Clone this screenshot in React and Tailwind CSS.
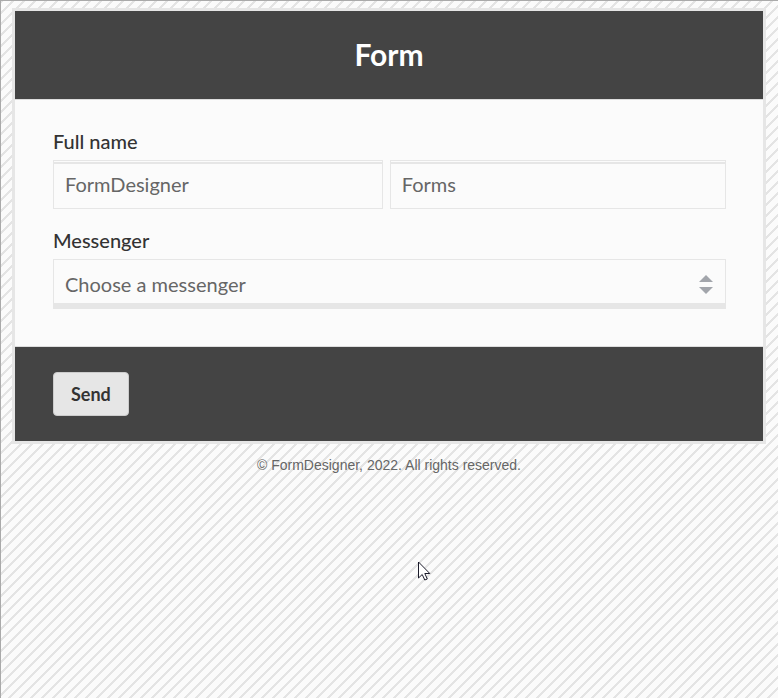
import { useState } from "react";

const fieldClass =
  "block w-full px-[11px] text-xl text-[#666666] bg-[#fbfbfb] border border-[#e6e6e6] outline-none";

function FormHeader({ title }) {
  return (
    <header className="flex items-center justify-center h-[88px] pb-[2px] bg-[#444444]">
      <h1 className="text-3xl font-bold text-white">{title}</h1>
    </header>
  );
}

function NameField({ value, onChange, label }) {
  return (
    <input
      type="text"
      aria-label={label}
      value={value}
      onChange={(e) => onChange(e.target.value)}
      className={`${fieldClass} h-[49px] pb-[2px] shadow-[inset_0_1px_0_#fbfbfb,inset_0_3px_0_#e6e6e6]`}
    />
  );
}

export default function App() {
  const [firstName, setFirstName] = useState("FormDesigner");
  const [lastName, setLastName] = useState("Forms");
  const [messenger, setMessenger] = useState("");

  return (
    <div className="relative min-h-screen pl-[14px] pr-[15px] pt-[10px] border-l border-t border-[#aaaaaa] bg-[#fbfbfb] bg-[linear-gradient(135deg,#e4e4e4_12%,#fbfbfb_12%,#fbfbfb_50%,#e4e4e4_50%,#e4e4e4_62%,#fbfbfb_62%)] bg-[length:11px_11px] font-['Trebuchet_MS',Lato,sans-serif]">
      <form
        onSubmit={(e) => e.preventDefault()}
        className="bg-[#fbfbfb] shadow-[0_0_0_3px_#e6e6e6]"
      >
        <FormHeader title="Form" />

        <div className="pl-[38px] pr-[37px] pt-[27px] pb-[37px] border-y border-[#dddddd]">
          {/* Full name */}
          <fieldset>
            <legend className="mb-[5px] text-xl font-medium text-[#333333]">Full name</legend>
            <div className="flex gap-[7px]">
              <div className="w-[49%]">
                <NameField label="First name" value={firstName} onChange={setFirstName} />
              </div>
              <div className="flex-1">
                <NameField label="Last name" value={lastName} onChange={setLastName} />
              </div>
            </div>
          </fieldset>

          {/* Messenger */}
          <div className="mt-[17px]">
            <label
              htmlFor="messenger"
              className="block mb-[5px] text-xl font-medium text-[#333333]"
            >
              Messenger
            </label>
            <div className="relative">
              <select
                id="messenger"
                value={messenger}
                onChange={(e) => setMessenger(e.target.value)}
                className={`${fieldClass} h-[50px] appearance-none pt-1 border-b-6`}
              >
                <option value="">Choose a messenger</option>
                <option value="telegram">Telegram</option>
                <option value="whatsapp">WhatsApp</option>
              </select>
              <svg
                width="14"
                height="19"
                viewBox="0 0 14 19"
                fill="#a2a5ab"
                className="absolute right-[13px] top-4 pointer-events-none"
              >
                <path d="M0 7 7 0l7 7z" />
                <path d="M0 12h14l-7 7z" />
              </svg>
            </div>
          </div>
        </div>

        <footer className="px-[38px] py-[25px] bg-[#444444]">
          <button
            type="submit"
            className="block h-11 px-[17px] text-lg font-bold text-[#333333] bg-[#e6e6e6] border border-[#cccccc] rounded"
          >
            Send
          </button>
        </footer>
      </form>

      <p className="mt-[14px] text-center text-sm text-[#666666] font-['Liberation_Sans',Arial,sans-serif]">
        © FormDesigner, 2022. All rights reserved.
      </p>

      {/* Mouse pointer */}
      <svg
        width="13"
        height="21"
        viewBox="0 0 13 21"
        className="absolute left-[417px] top-[560px] pointer-events-none"
      >
        <path
          d="M.5 1v16l3.700-3.500 2.600 5.500 2.500-1-2.500-5.500h5z"
          fill="white"
          stroke="#1b1b2b"
        />
      </svg>
    </div>
  );
}
